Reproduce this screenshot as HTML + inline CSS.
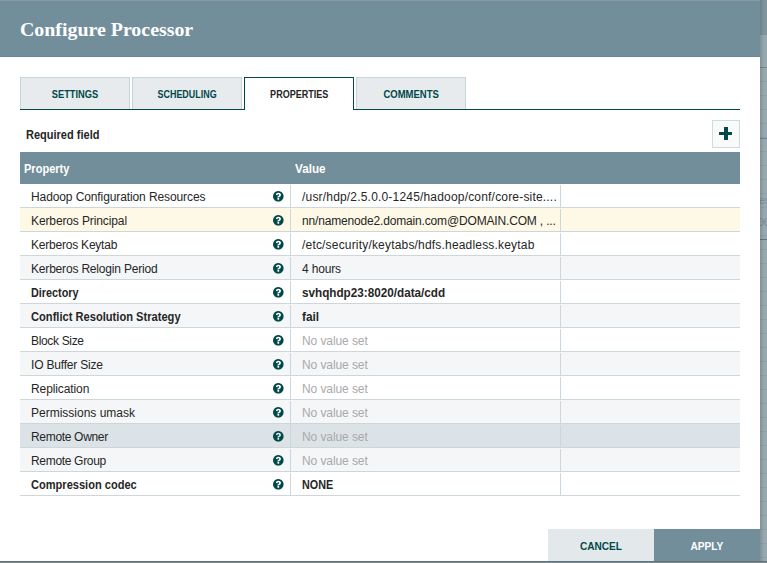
<!DOCTYPE html>
<html><head><meta charset="utf-8">
<style>
*{box-sizing:border-box;margin:0;padding:0}
html,body{width:767px;height:563px;overflow:hidden}
body{background:#8d9fa7;font-family:"Liberation Sans",sans-serif;position:relative}
.bgtop{position:absolute;left:0;top:0;width:767px;height:1px;background:#899ca5}
.bgright{position:absolute;left:760px;top:0;width:7px;height:563px;background:repeating-linear-gradient(to bottom,rgba(0,0,0,0) 0,rgba(0,0,0,0) 13px,rgba(60,80,90,.10) 13px,rgba(60,80,90,.10) 14px) 0 68px/7px 14px,#98a8af}
.bgr{position:absolute;left:760px;width:7px}
.shade{position:absolute;left:760px;top:0;width:7px;height:563px;background:linear-gradient(to right,rgba(40,60,70,.22) 0,rgba(40,60,70,.10) 2px,rgba(40,60,70,0) 4px)}
.bgbottom{position:absolute;left:0;top:561px;width:767px;height:2px;background:linear-gradient(to bottom,#627278 0,#627278 1px,#7a8a90 1px)}
.dialog{position:absolute;left:0;top:1px;width:760px;height:560px;background:#fff}
.dialog>*{position:absolute}
.hdr{left:0;top:0;width:760px;height:56px;background:#728e9b;border-bottom:1px solid #6a8692}
.hdr .t{position:absolute;left:20px;top:17px;color:#fff;font-family:"Liberation Serif",serif;font-weight:bold;font-size:19px;line-height:24px;white-space:nowrap}
.tab{top:76px;width:110px;height:32px;background:#e7ebee;border:1px solid #c6d5d7;border-bottom:none;color:#004849;font-size:10px;font-weight:bold;text-align:center;line-height:12px;padding-top:11px;white-space:nowrap}
.tab.sel{background:#fff;border-color:#004849;height:33px;color:#262626}
.tabline{top:108px;height:1px;background:#004849}
.tabline.l1{left:20px;width:225px}
.tabline.l2{left:353px;width:387px}
.req{left:26px;top:127px;font-size:12px;font-weight:bold;color:#262626;line-height:14px;white-space:nowrap}
.plus{left:712px;top:119px;width:28px;height:28px;border:1px solid #cfdcdf;background:#f9fbfb}
.plus i{position:absolute;background:#004849}
.plus .h{left:6px;top:11px;width:13px;height:3px}
.plus .v{left:11px;top:6px;width:4px;height:13px}
.gh{left:20px;top:151px;width:720px;height:32px;background:#728e9b;color:#fff;font-weight:bold;font-size:12px}
.gh span{position:absolute;top:10px;line-height:14px;white-space:nowrap}
.gh .p{left:4px}
.gh .vv{left:275px}
.row{left:20px;width:720px;height:24px;border-bottom:1px solid #cdd6db;font-size:12px;color:#262626;background:#fff}
.row.odd{background:#f4f6f7}
.row.sel{background:#fef9e6}
.row.hov{background:#dce3e6}
.row span{position:absolute}
.row .n,.row .v{top:6px;line-height:14px;white-space:nowrap}
.row .n{left:11px}
.row .v{left:282px}
.row .q{position:absolute;left:253px;top:7.2px;width:10.6px;height:10.6px}
.row .c1{left:270px;top:1px;height:22px;border-left:1px solid #cdd6db}
.row .c2{left:540px;top:1px;height:22px;border-left:1px solid #cdd6db}
.b{font-weight:bold}
.unset{color:#a9a9a9}
.btn{top:528px;height:32px;font-size:11px;font-weight:bold;text-align:center;line-height:12px;padding-top:11px;white-space:nowrap}
.cancel{left:548px;width:106px;background:#e3e8eb;color:#004849}
.apply{left:654px;width:106px;background:#728e9b;color:#fff}
.tab span,.btn span{display:inline-block;transform-origin:50% 50%}
.req,.gh span,.row .n,.row .v,.hdr .t{transform-origin:0 50%}
</style></head><body>
<div class="bgtop"></div><div class="bgright"></div><div class="bgr" style="top:0;height:35px;background:#7f939c"></div><div class="bgr" style="top:35px;height:32px;background:#98a7ae"></div><div class="bgr" style="top:67px;height:1px;background:#74878f"></div><div class="bgr" style="top:138px;height:1px;background:#70848d"></div><div class="bgr" style="top:239px;height:1px;background:#55767d"></div><div class="bgr" style="top:194px;height:12px;overflow:hidden;font-size:11px;color:#7d8d94;line-height:12px;white-space:nowrap"><span style="position:absolute;left:-1px">es</span></div><div class="bgr" style="top:216px;height:12px;overflow:hidden;font-size:11px;color:#7d8d94;line-height:12px;white-space:nowrap"><span style="position:absolute;left:-2px">00</span></div><div class="shade"></div><div class="bgbottom"></div>
<svg width="0" height="0" style="position:absolute"><defs><path id="qc" fill="#004849" d="M1024 1376v-192q0-14-9-23t-23-9h-192q-14 0-23 9t-9 23v192q0 14 9 23t23 9h192q14 0 23-9t9-23zm256-672q0-88-55.5-163t-138.5-116-170-41q-243 0-371 213-15 24 8 42l132 100q7 6 19 6 16 0 25-12 53-68 86-92 34-24 86-24 48 0 85.5 26t37.5 59q0 38-20 61t-68 45q-63 28-115.5 86.5t-52.5 125.5v36q0 14 9 23t23 9h192q14 0 23-9t9-23q0-19 21.5-49.5t54.5-49.5q32-18 49-28.5t46-35 44.5-48 28-60.5 12.5-81zm384 192q0 209-103 385.5t-279.5 279.5-385.5 103-385.5-103-279.5-279.5-103-385.5 103-385.5 279.5-279.5 385.5-103 385.5 103 279.5 279.5 103 385.5z"/></defs></svg>
<div class="dialog">
<div class="hdr"><span class="t" style="transform:scaleX(1.0464);">Configure Processor</span></div>
<div class="tabline l1"></div><div class="tabline l2"></div>
<div class="tab" style="left:20px"><span style="transform:scaleX(0.9280);">SETTINGS</span></div>
<div class="tab" style="left:132px"><span style="transform:scaleX(0.8940);">SCHEDULING</span></div>
<div class="tab sel" style="left:244px"><span style="transform:scaleX(0.9032);">PROPERTIES</span></div>
<div class="tab" style="left:356px"><span style="transform:scaleX(0.9501);">COMMENTS</span></div>
<div class="req" style="transform:scaleX(0.9176);">Required field</div>
<div class="plus"><i class="h"></i><i class="v"></i></div>
<div class="gh"><span class="p" style="transform:scaleX(0.9200);">Property</span><span class="vv" style="transform:scaleX(0.9742);">Value</span></div>
<div class="row " style="top:183px"><span class="n" style="letter-spacing:-0.103px;">Hadoop Configuration Resources</span><svg class="q" viewBox="128 128 1536 1536"><use href="#qc"/></svg><span class="c1"></span><span class="v" style="letter-spacing:0.186px;">/usr/hdp/2.5.0.0-1245/hadoop/conf/core-site....</span><span class="c2"></span></div>
<div class="row sel" style="top:207px"><span class="n" style="letter-spacing:-0.117px;">Kerberos Principal</span><svg class="q" viewBox="128 128 1536 1536"><use href="#qc"/></svg><span class="c1"></span><span class="v" style="letter-spacing:-0.166px;">nn/namenode2.domain.com@DOMAIN.COM , ...</span><span class="c2"></span></div>
<div class="row " style="top:231px"><span class="n" style="letter-spacing:-0.215px;">Kerberos Keytab</span><svg class="q" viewBox="128 128 1536 1536"><use href="#qc"/></svg><span class="c1"></span><span class="v" style="letter-spacing:0.184px;">/etc/security/keytabs/hdfs.headless.keytab</span><span class="c2"></span></div>
<div class="row odd" style="top:255px"><span class="n" style="letter-spacing:-0.182px;">Kerberos Relogin Period</span><svg class="q" viewBox="128 128 1536 1536"><use href="#qc"/></svg><span class="c1"></span><span class="v" style="letter-spacing:-0.167px;">4 hours</span><span class="c2"></span></div>
<div class="row " style="top:279px"><span class="n b" style="transform:scaleX(0.9019);">Directory</span><svg class="q" viewBox="128 128 1536 1536"><use href="#qc"/></svg><span class="c1"></span><span class="v b" style="transform:scaleX(0.9755);">svhqhdp23:8020/data/cdd</span><span class="c2"></span></div>
<div class="row odd" style="top:303px"><span class="n b" style="transform:scaleX(0.9271);">Conflict Resolution Strategy</span><svg class="q" viewBox="128 128 1536 1536"><use href="#qc"/></svg><span class="c1"></span><span class="v b" style="transform:scaleX(0.9888);">fail</span><span class="c2"></span></div>
<div class="row " style="top:327px"><span class="n" style="letter-spacing:-0.335px;">Block Size</span><svg class="q" viewBox="128 128 1536 1536"><use href="#qc"/></svg><span class="c1"></span><span class="v unset" style="letter-spacing:-0.090px;">No value set</span><span class="c2"></span></div>
<div class="row odd" style="top:351px"><span class="n" style="letter-spacing:-0.193px;">IO Buffer Size</span><svg class="q" viewBox="128 128 1536 1536"><use href="#qc"/></svg><span class="c1"></span><span class="v unset" style="letter-spacing:-0.090px;">No value set</span><span class="c2"></span></div>
<div class="row " style="top:375px"><span class="n" style="letter-spacing:-0.100px;">Replication</span><svg class="q" viewBox="128 128 1536 1536"><use href="#qc"/></svg><span class="c1"></span><span class="v unset" style="letter-spacing:-0.090px;">No value set</span><span class="c2"></span></div>
<div class="row odd" style="top:399px"><span class="n" style="">Permissions umask</span><svg class="q" viewBox="128 128 1536 1536"><use href="#qc"/></svg><span class="c1"></span><span class="v unset" style="letter-spacing:-0.090px;">No value set</span><span class="c2"></span></div>
<div class="row hov" style="top:423px"><span class="n" style="letter-spacing:-0.319px;">Remote Owner</span><svg class="q" viewBox="128 128 1536 1536"><use href="#qc"/></svg><span class="c1"></span><span class="v unset" style="letter-spacing:-0.090px;">No value set</span><span class="c2"></span></div>
<div class="row odd" style="top:447px"><span class="n" style="letter-spacing:-0.319px;">Remote Group</span><svg class="q" viewBox="128 128 1536 1536"><use href="#qc"/></svg><span class="c1"></span><span class="v unset" style="letter-spacing:-0.090px;">No value set</span><span class="c2"></span></div>
<div class="row " style="top:471px"><span class="n b" style="transform:scaleX(0.9217);">Compression codec</span><svg class="q" viewBox="128 128 1536 1536"><use href="#qc"/></svg><span class="c1"></span><span class="v b" style="transform:scaleX(0.8972);">NONE</span><span class="c2"></span></div>
<div class="btn cancel"><span style="transform:scaleX(0.9138);">CANCEL</span></div>
<div class="btn apply"><span style="transform:scaleX(0.9227);">APPLY</span></div>
</div>
</body></html>
